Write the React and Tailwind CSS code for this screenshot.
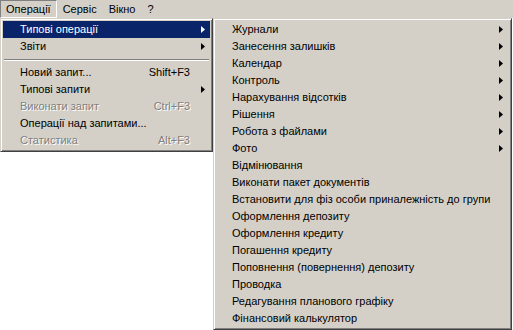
import React from 'react';

const mainItems = [
  { label: 'Типові операції', sub: true, active: true },
  { label: 'Звіти', sub: true },
  { sep: true },
  { label: 'Новий запит...', key: 'Shift+F3' },
  { label: 'Типові запити', sub: true },
  { label: 'Виконати запит', key: 'Ctrl+F3', disabled: true },
  { label: 'Операції над запитами...' },
  { label: 'Статистика', key: 'Alt+F3', disabled: true },
];

const subItems = [
  { label: 'Журнали', sub: true },
  { label: 'Занесення залишків', sub: true },
  { label: 'Календар', sub: true },
  { label: 'Контроль', sub: true },
  { label: 'Нарахування відсотків', sub: true },
  { label: 'Рішення', sub: true },
  { label: 'Робота з файлами', sub: true },
  { label: 'Фото', sub: true },
  { label: 'Відмінювання' },
  { label: 'Виконати пакет документів' },
  { label: 'Встановити для фіз особи приналежність до групи' },
  { label: 'Оформлення депозиту' },
  { label: 'Оформлення кредиту' },
  { label: 'Погашення кредиту' },
  { label: 'Поповнення (повернення) депозиту' },
  { label: 'Проводка' },
  { label: 'Редагування планового графіку' },
  { label: 'Фінансовий калькулятор' },
];

const Arrow = ({ white }) => (
  <svg width="4" height="7" viewBox="0 0 4 7" className="shrink-0">
    <path d="M0 0 L4 3.5 L0 7 Z" fill={white ? '#ffffff' : '#000000'} />
  </svg>
);

const menuBox =
  'absolute bg-[#d4d0c8] border border-t-[#d4d0c8] border-l-[#d4d0c8] border-r-[#404040] border-b-[#404040] shadow-[inset_1px_1px_0_#ffffff,inset_-1px_-1px_0_#808080] p-[2px]';

const App = () => {
  return (
    <div className="relative w-[513px] h-[330px] overflow-hidden bg-white text-[11px] text-black font-['Liberation_Sans',Arial,sans-serif]">
      {/* Menu bar */}
      <div className="h-[18px] bg-[#d4d0c8] flex items-stretch">
        <div className="px-[5px] flex items-center border border-t-[#808080] border-l-[#808080] border-r-white border-b-white">
          Операції
        </div>
        <div className="px-[6px] flex items-center">Сервіс</div>
        <div className="px-[6px] flex items-center">Вікно</div>
        <div className="px-[6px] flex items-center">?</div>
      </div>

      {/* Main dropdown */}
      <div className={`${menuBox} left-0 top-[18px] w-[213px]`}>
        {mainItems.map((it, i) =>
          it.sep ? (
            <div key={i} className="h-[9px] flex flex-col justify-center px-[1px]">
              <div className="h-px bg-[#808080]" />
              <div className="h-px bg-white" />
            </div>
          ) : (
            <div
              key={i}
              className={`h-[17px] flex items-center pl-[17px] pr-[5px] ${
                it.active ? 'bg-[#0a246a] text-white' : ''
              } ${it.disabled ? 'text-[#808080] [text-shadow:1px_1px_0_#ffffff]' : ''}`}
            >
              <span className="flex-1 whitespace-nowrap">{it.label}</span>
              {it.key && <span className="mr-[15px] whitespace-nowrap">{it.key}</span>}
              {it.sub && <Arrow white={it.active} />}
            </div>
          )
        )}
      </div>

      {/* Submenu */}
      <div className={`${menuBox} left-[213px] top-[18px] w-[299px]`}>
        {subItems.map((it, i) => (
          <div key={i} className="h-[17px] flex items-center pl-[16px] pr-[6px]">
            <span className="flex-1 whitespace-nowrap">{it.label}</span>
            {it.sub && <Arrow />}
          </div>
        ))}
      </div>
    </div>
  );
};

export default App;
